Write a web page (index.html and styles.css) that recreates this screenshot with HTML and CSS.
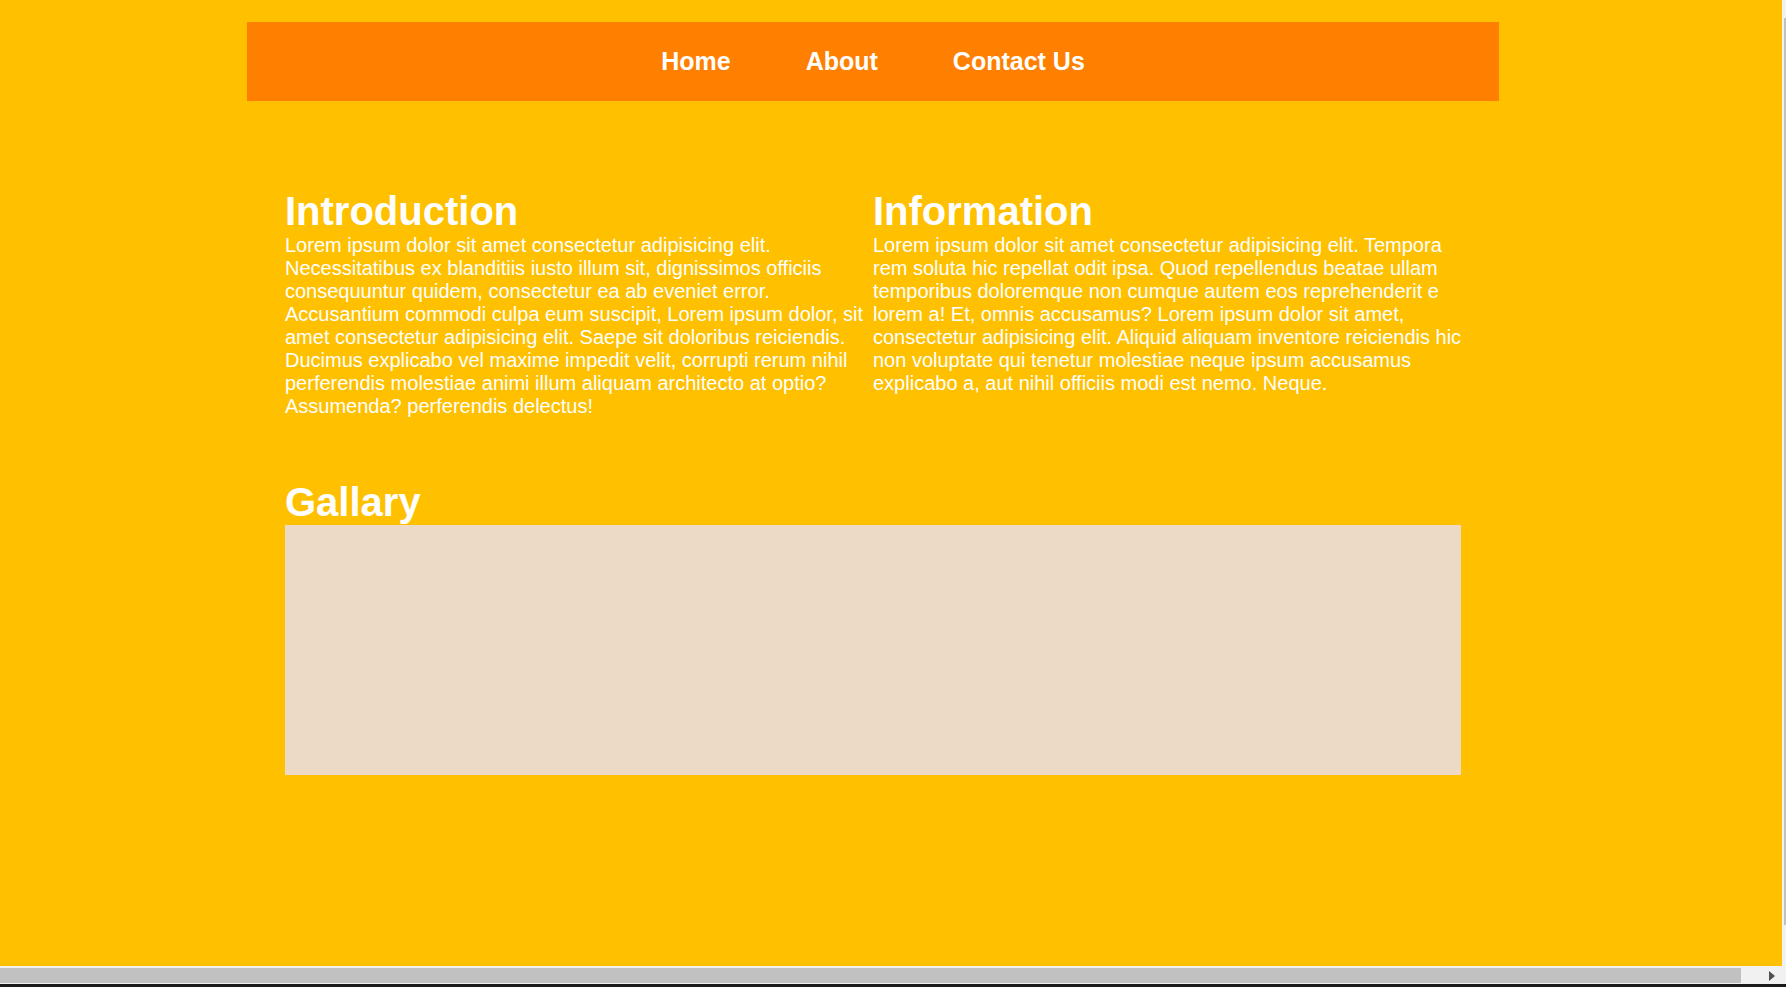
FILE: index.html
```html
<!DOCTYPE html>
<html lang="en">
<head>
<meta charset="utf-8">
<title>Page</title>
<link rel="stylesheet" href="styles.css">
</head>
<body>
<div class="page">
  <nav class="nav">
    <ul class="nav-list">
      <li><a class="nav-link" href="#">Home</a></li>
      <li><a class="nav-link" href="#">About</a></li>
      <li><a class="nav-link" href="#">Contact Us</a></li>
    </ul>
  </nav>
  <main class="content">
    <section class="columns">
      <div class="col">
        <h2 class="title">Introduction</h2>
        <p class="text">Lorem ipsum dolor sit amet consectetur adipisicing elit. Necessitatibus ex blanditiis iusto illum sit, dignissimos officiis consequuntur quidem, consectetur ea ab eveniet error. Accusantium commodi culpa eum suscipit, Lorem ipsum dolor, sit amet consectetur adipisicing elit. Saepe sit doloribus reiciendis. Ducimus explicabo vel maxime impedit velit, corrupti rerum nihil perferendis molestiae animi illum aliquam architecto at optio? Assumenda? perferendis delectus!</p>
      </div>
      <div class="col">
        <h2 class="title">Information</h2>
        <p class="text">Lorem ipsum dolor sit amet consectetur adipisicing elit. Tempora rem soluta hic repellat odit ipsa. Quod repellendus beatae ullam temporibus doloremque non cumque autem eos reprehenderit e lorem a! Et, omnis accusamus? Lorem ipsum dolor sit amet, consectetur adipisicing elit. Aliquid aliquam inventore reiciendis hic non voluptate qui tenetur molestiae neque ipsum accusamus explicabo a, aut nihil officiis modi est nemo. Neque.</p>
      </div>
    </section>
    <section class="gallery">
      <h2 class="title">Gallary</h2>
      <div class="gallery-box"></div>
    </section>
  </main>
</div>
<div class="vscroll" aria-hidden="true"><div class="vthumb"></div></div>
<div class="hscroll" aria-hidden="true">
  <div class="htrack">
    <div class="hthumb"></div>
    <div class="harrow"></div>
  </div>
  <div class="hedge"></div>
</div>
</body>
</html>
```
FILE: styles.css
```css
html, body {
  margin: 0;
  padding: 0;
}
body {
  background: #ffc000;
  color: #fff;
  font-family: "Liberation Sans", Arial, sans-serif;
  min-height: 987px;
}
.page {
  width: 1252px;
  margin-left: 247px;
  padding-top: 22px;
}
.nav {
  height: 79px;
  background: #ff8000;
  display: flex;
  align-items: center;
  justify-content: center;
}
.nav-list {
  list-style: none;
  margin: 0;
  padding: 0;
  display: flex;
  gap: 75px;
}
.nav-link {
  color: #fff;
  text-decoration: none;
  font-weight: bold;
  font-size: 25px;
}
.content {
  padding: 88px 38px 0;
}
.columns {
  display: grid;
  grid-template-columns: 588px 594px;
}
.title {
  margin: 0;
  font-size: 40px;
  font-weight: bold;
  line-height: normal;
}
.text {
  margin: 0;
  font-size: 20px;
  line-height: normal;
}
.gallery {
  margin-top: 62px;
}
.gallery-box {
  height: 250px;
  background: #ecdac7;
}
.vscroll {
  position: fixed;
  top: 0;
  right: 0;
  width: 4px;
  height: 984px;
  background: #f1f1f1;
}
.vthumb {
  margin: 18px 0 0 2px;
  width: 2px;
  height: 907px;
  background: #c1c1c1;
}
.hscroll {
  position: fixed;
  left: 0;
  bottom: 0;
  width: 100%;
  height: 21px;
}
.htrack {
  height: 18px;
  width: 1782px;
  background: #f1f1f1;
  display: flex;
  align-items: center;
}
.hthumb {
  width: 1741px;
  height: 15px;
  margin-top: 1px;
  background: #c1c1c1;
}
.harrow {
  margin-left: 28px;
  margin-top: 2px;
  width: 0;
  height: 0;
  border-top: 5px solid transparent;
  border-bottom: 5px solid transparent;
  border-left: 6px solid #505050;
}
.hedge {
  height: 3px;
  background: #1b1b1b;
}
```
